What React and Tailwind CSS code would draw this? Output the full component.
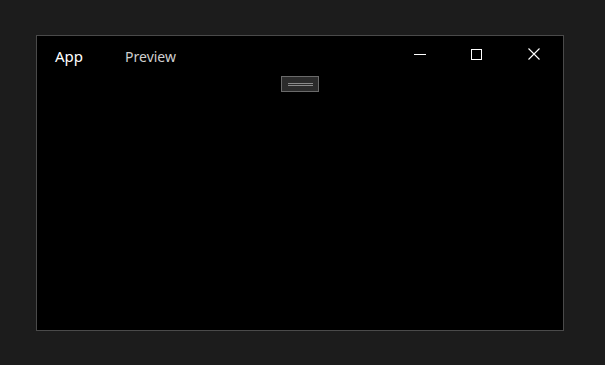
import React from "react";

const App = () => {
  return (
    <div className="w-[605px] h-[365px] bg-[#1c1c1c] pl-[36px] pt-[35px]" style={{ fontFamily: '"Noto Sans", "Open Sans", sans-serif' }}>
      <div className="relative w-[528px] h-[296px] bg-black border border-[#4a4a4a] flex flex-col">
        <div className="h-[40px] flex items-center">
          <span className="ml-[18px] text-white text-[15px]">App</span>
          <span className="ml-[42px] text-[#cfcfcf] text-[14px]">Preview</span>
          <div className="ml-auto flex items-center h-full pb-[4px] pr-[1px]">
            <button className="w-[57px] h-full flex items-center justify-center">
              <div className="w-[12px] h-px bg-white" />
            </button>
            <button className="w-[57px] h-full flex items-center justify-center">
              <div className="w-[11px] h-[11px] border border-white" />
            </button>
            <button className="w-[57px] h-full flex items-center justify-center">
              <svg width="12" height="12" viewBox="0 0 12 12">
                <path d="M0.5 0.5 L11.5 11.5 M11.5 0.5 L0.5 11.5" stroke="white" strokeWidth="1.1" />
              </svg>
            </button>
          </div>
        </div>
        <div className="flex-1" />
        <div className="absolute left-1/2 -translate-x-1/2 top-[40px] w-[38px] h-[16px] bg-[#2b2b2b] border border-[#6a6a6a] flex flex-col items-center justify-center gap-px">
          <div className="w-[25px] h-px bg-[#8a8a8a]" />
          <div className="w-[25px] h-px bg-[#8a8a8a]" />
        </div>
      </div>
    </div>
  );
};

export default App;
